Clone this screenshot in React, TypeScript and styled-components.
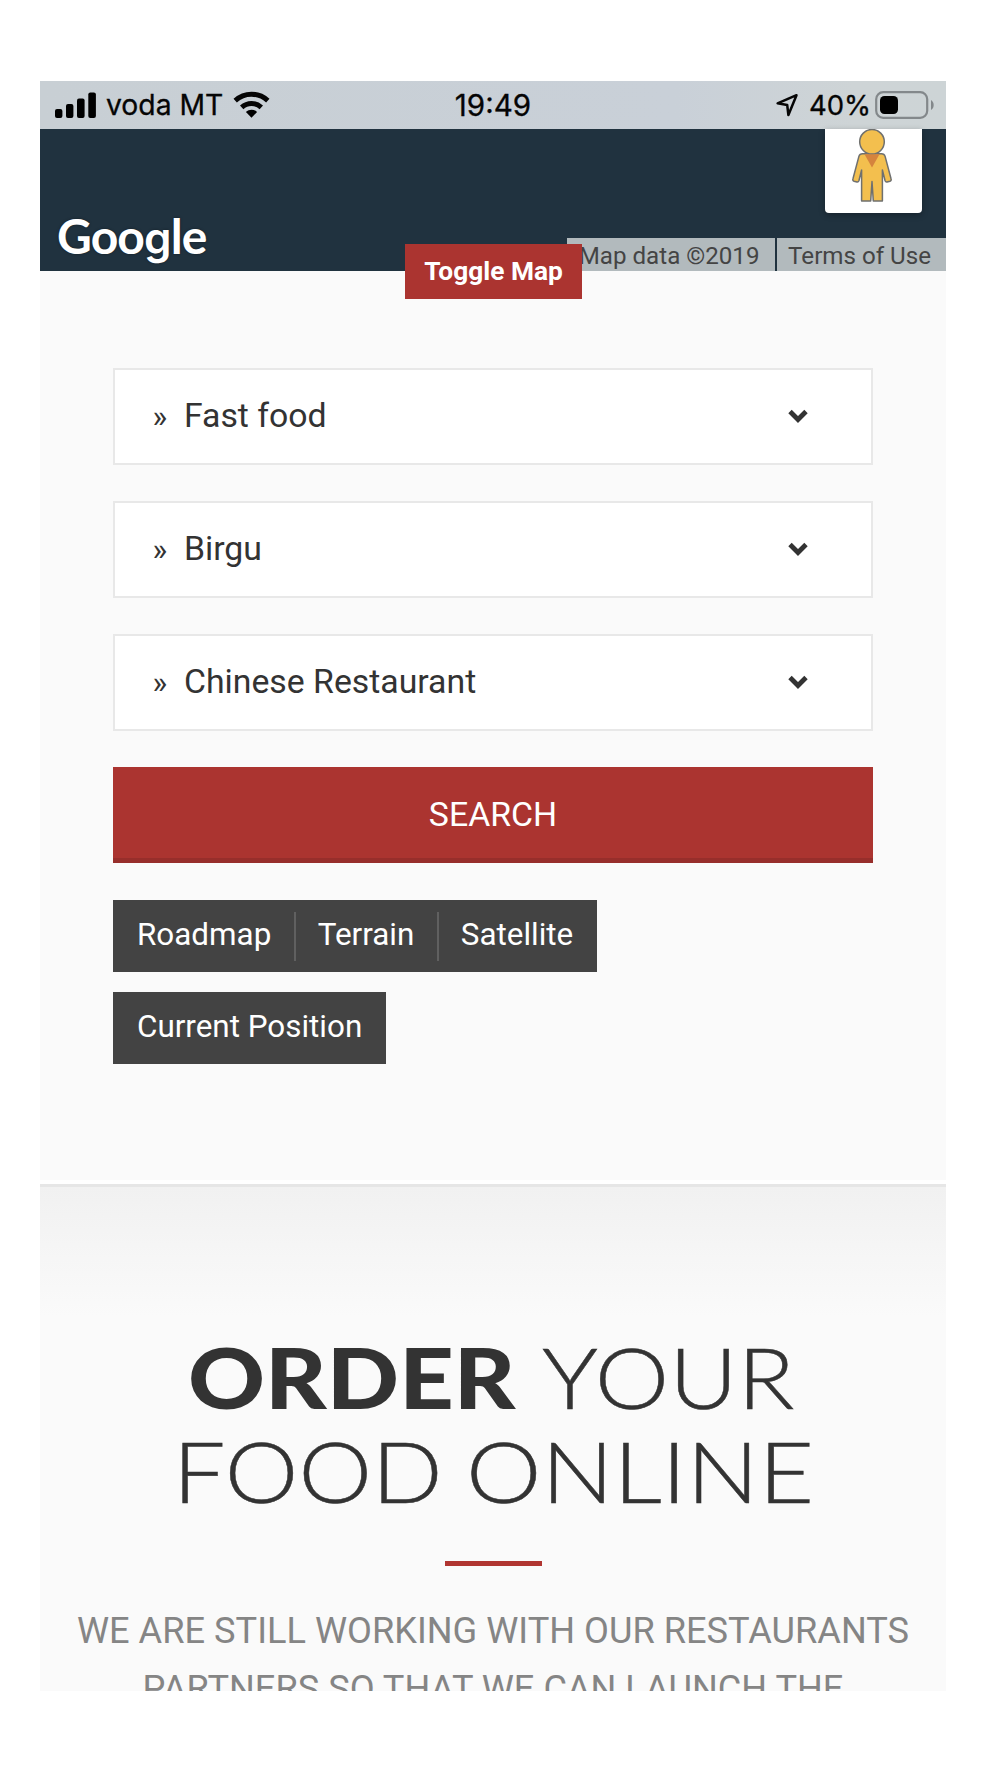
import React from "react";
import styled, { createGlobalStyle } from "styled-components";

const red = "#ab3430";
const ink = "#333333";

const GlobalStyle = createGlobalStyle`
  * { box-sizing: border-box; }
  body { margin: 0; background: #fff; font-family: Roboto, "Liberation Sans", sans-serif; }
`;

const Page = styled.div`
  height: 1778px;
  padding: 81px 54px 0 40px;
  overflow: hidden;
`;

const Screen = styled.main`
  height: 1610px;
  overflow: hidden;
  background: #fafafa;
`;

const StatusBar = styled.header`
  height: 48px;
  display: grid;
  grid-template-columns: 1fr auto 1fr;
  align-items: center;
  padding: 0 11px 0 14px;
  background: linear-gradient(90deg, #c8cfd4, #c9d0d8 70%, #ced4d6 90%, #cdd4d6);
  color: #050505;
  font-family: Inter, Roboto, sans-serif;
  font-weight: 400;
`;

const StatusGroup = styled.div<{ $end?: boolean }>`
  display: flex;
  align-items: center;
  justify-content: ${(p) => (p.$end ? "flex-end" : "flex-start")};
  svg { display: block; flex: none; }
`;

const StatusText = styled.span<{ $size: number; $gap?: string }>`
  font-size: ${(p) => p.$size}px;
  line-height: 46px;
  margin: ${(p) => p.$gap ?? "0"};
  white-space: nowrap;
  -webkit-text-stroke: 0.3px #050505;
`;

const MapStrip = styled.section`
  position: relative;
  height: 142px;
  background: #20323f;
`;

const GoogleMark = styled.span`
  position: absolute;
  left: 17px;
  top: 77px;
  font: 700 48px/60px Lato, sans-serif;
  letter-spacing: -0.9px;
  color: #fff;
  text-shadow: 0 0 3px rgba(0, 0, 0, 0.4);
`;

const RoundG = styled.span`
  font: 600 44px/1 Inter, sans-serif;
`;

const StreetView = styled.div`
  position: absolute;
  right: 24px;
  top: 0;
  width: 97px;
  height: 84px;
  padding-right: 3px;
  background: #fff;
  border-radius: 0 0 4px 4px;
  box-shadow: 0 2px 6px rgba(0, 0, 0, 0.3);
  display: flex;
  justify-content: center;
  svg { display: block; }
`;

const Attribution = styled.div`
  position: absolute;
  right: 0;
  bottom: 0;
  display: flex;
  gap: 2px;
`;

const Credit = styled.span<{ $width: number; $pad: number }>`
  width: ${(p) => p.$width}px;
  height: 33px;
  padding-right: ${(p) => p.$pad}px;
  background: #b2babd;
  color: #444;
  font-size: 24.15px;
  line-height: 36px;
  text-align: right;
  white-space: nowrap;
`;

const ToggleMap = styled.button`
  position: absolute;
  left: 365px;
  top: 115px;
  width: 177px;
  height: 55px;
  padding: 0;
  border: 0;
  background: ${red};
  color: #fff;
  font: 700 26.3px/55px Roboto, sans-serif;
`;

const SearchPanel = styled.section`
  height: 909px;
  padding: 97px 73px 0;
  display: flex;
  flex-direction: column;
`;

const Select = styled.div`
  height: 97px;
  margin-bottom: 36px;
  padding: 0 62px 2px 37.5px;
  display: flex;
  align-items: center;
  border: 2.4px solid #e8e8e8;
  background: #fff;
  color: ${ink};
  svg { display: block; }
`;

const Label = styled.span`
  flex: 1;
  font-size: 33.8px;
`;

const Quote = styled.span`
  display: inline-block;
  width: 31.4px;
  font-size: 31.4px;
`;

const SearchButton = styled.button`
  height: 96px;
  margin-bottom: 37px;
  padding: 4px 0 0;
  border: 0;
  border-bottom: 5px solid #972e2b;
  background: ${red};
  color: #fff;
  font: 400 33.8px/1 Roboto, sans-serif;
`;

const MapButton = styled.button`
  height: 49px;
  padding: 0 23px 4px 21.5px;
  border: 0;
  border-right: 2px solid #606060;
  background: none;
  color: #fff;
  font: 400 31.4px/45px Roboto, sans-serif;

  &:first-child { padding-left: 24px; }
  &:last-child { padding-right: 24px; border-right: 0; }
`;

const ButtonBar = styled.div`
  align-self: flex-start;
  height: 72px;
  margin-bottom: 20px;
  display: flex;
  align-items: center;
  background: #434343;
`;

const Intro = styled.section`
  height: 600px;
  border-top: 4px solid #fff;
  text-align: center;
`;

const IntroBody = styled.div`
  border-top: 3px solid #e6e6e6;
  background: linear-gradient(#f1f1f1, #fafafa 130px);
  display: flex;
  flex-direction: column;
  align-items: center;
`;

const Heading = styled.h1`
  margin: 143px 0 0;
  width: 100%;
  color: ${ink};
  font: 300 84.5px/94px Lato, sans-serif;
`;

const HeadingLine = styled.span<{ $indent: number }>`
  display: flex;
  padding-left: ${(p) => p.$indent}px;
`;

const Word = styled.span<{ $width: number; $stretch: number; $bold?: boolean }>`
  width: ${(p) => p.$width}px;
  font-weight: ${(p) => (p.$bold ? 900 : 300)};
  -webkit-text-stroke: ${(p) => (p.$bold ? 0 : 0.5)}px ${ink};
  text-align: left;
  white-space: nowrap;
  transform: scaleX(${(p) => p.$stretch});
  transform-origin: left;
`;

const Rule = styled.hr`
  width: 97px;
  height: 5px;
  margin: 43px 0 36px;
  border: 0;
  background: #b03531;
`;

const Copy = styled.p`
  margin: 0;
  color: #858585;
  font-size: 36.2px;
  line-height: 58px;
  white-space: nowrap;
`;

const Chevron = () => (
  <svg width="22" height="16" viewBox="0 0 22 16">
    <path d="M3 3.500 11 11.500l8-8" fill="none" stroke="#333" strokeWidth="4.8" />
  </svg>
);

const Signal = () => (
  <svg width="42" height="27" viewBox="0 0 42 27">
    <rect x="1" y="17" width="7.4" height="9" rx="2" />
    <rect x="12" y="12" width="7.4" height="14" rx="2" />
    <rect x="23" y="6.5" width="7.6" height="19.5" rx="2" />
    <rect x="34.3" y="0.5" width="7.6" height="25.5" rx="2" />
  </svg>
);

const Wifi = () => (
  <svg width="37" height="28" viewBox="0 0 37 28">
    <g fill="none" stroke="#050505" strokeWidth="5">
      <path d="M2.2 9.6C11.5 1.1 25.5 1.1 34.8 9.6" />
      <path d="M8.7 16.3C14.4 11.1 22.6 11.1 28.3 16.3" />
    </g>
    <path d="M12.9 20.9C16.2 17.9 20.8 17.9 24.1 20.9L18.5 26.8Z" />
  </svg>
);

const LocationArrow = () => (
  <svg width="24" height="25" viewBox="0 0 24 25">
    <path d="M21.500 2.200 2.600 10.300l9.600 1.700 1.200 10Z" fill="none" stroke="#050505" strokeWidth="2.5" strokeLinejoin="round" />
  </svg>
);

const Battery = () => (
  <svg width="60" height="28" viewBox="0 0 60 28">
    <rect x="1.2" y="1.2" width="51" height="25.6" rx="7" fill="none" stroke="#83888b" strokeWidth="2.2" />
    <rect x="5" y="5" width="18" height="18" rx="4.5" />
    <path d="M56 9C59.6 11 59.6 17 56 19Z" fill="#83888b" />
  </svg>
);

const Pegman = () => (
  <svg width="44" height="75" viewBox="0 0 44 75">
    <g fill="#f3bf4e" stroke="#6f706f" strokeWidth="1.5" strokeLinejoin="round">
      <path d="M12.5 24.8h19q2.8 0 3.6 2.6l6 22.600q.5 1.7-1.2 2.200l-2.800.7q-1.500.3-2-1.100L32.400 41v31h-9.100L22 52.500 20.700 72h-9.100V41L8.900 51.800q-.5 1.400-2 1.100l-2.800-.7Q2.400 51.700 2.900 50L8.900 27.400Q9.700 24.800 12.500 24.800Z" />
      <circle cx="22" cy="12.800" r="12.300" />
    </g>
    <path d="M14.500 25.200H29.500L22 38.500Z" fill="#d5843d" />
  </svg>
);

const choices = ["Fast food", "Birgu", "Chinese Restaurant"];

export default function App() {
  return (
    <>
      <GlobalStyle />
      <Page>
        <Screen>
          <StatusBar>
            <StatusGroup>
              <Signal />
              <StatusText $size={28.3} $gap="0 10px 0 10px">voda MT</StatusText>
              <Wifi />
            </StatusGroup>
            <StatusText $size={29.6} $gap="0 3px 0 0">19:49</StatusText>
            <StatusGroup $end>
              <LocationArrow />
              <StatusText $size={27.5} $gap="0 4px 0 10px">40%</StatusText>
              <Battery />
            </StatusGroup>
          </StatusBar>
          <MapStrip>
            <GoogleMark>Goo<RoundG>g</RoundG>le</GoogleMark>
            <StreetView><Pegman /></StreetView>
            <Attribution>
              <Credit $width={208} $pad={15.5}>Map data ©2019</Credit>
              <Credit $width={169} $pad={15}>Terms of Use</Credit>
            </Attribution>
            <ToggleMap>Toggle Map</ToggleMap>
          </MapStrip>
          <SearchPanel>
            {choices.map((name) => (
              <Select key={name}>
                <Label><Quote>»</Quote>{name}</Label>
                <Chevron />
              </Select>
            ))}
            <SearchButton>SEARCH</SearchButton>
            <ButtonBar>
              <MapButton>Roadmap</MapButton>
              <MapButton>Terrain</MapButton>
              <MapButton>Satellite</MapButton>
            </ButtonBar>
            <ButtonBar>
              <MapButton>Current Position</MapButton>
            </ButtonBar>
          </SearchPanel>
          <Intro>
            <IntroBody>
              <Heading>
                <HeadingLine $indent={148}>
                  <Word $bold $width={354} $stretch={1.125}>ORDER</Word>
                  <Word $width={260} $stretch={1.112}>YOUR</Word>
                </HeadingLine>
                <HeadingLine $indent={133}>
                  <Word $width={292.5} $stretch={1.1}>FOOD</Word>
                  <Word $width={350} $stretch={1.129}>ONLINE</Word>
                </HeadingLine>
              </Heading>
              <Rule />
              <Copy>
                WE ARE STILL WORKING WITH OUR RESTAURANTS<br />
                PARTNERS SO THAT WE CAN LAUNCH THE
              </Copy>
            </IntroBody>
          </Intro>
        </Screen>
      </Page>
    </>
  );
}
